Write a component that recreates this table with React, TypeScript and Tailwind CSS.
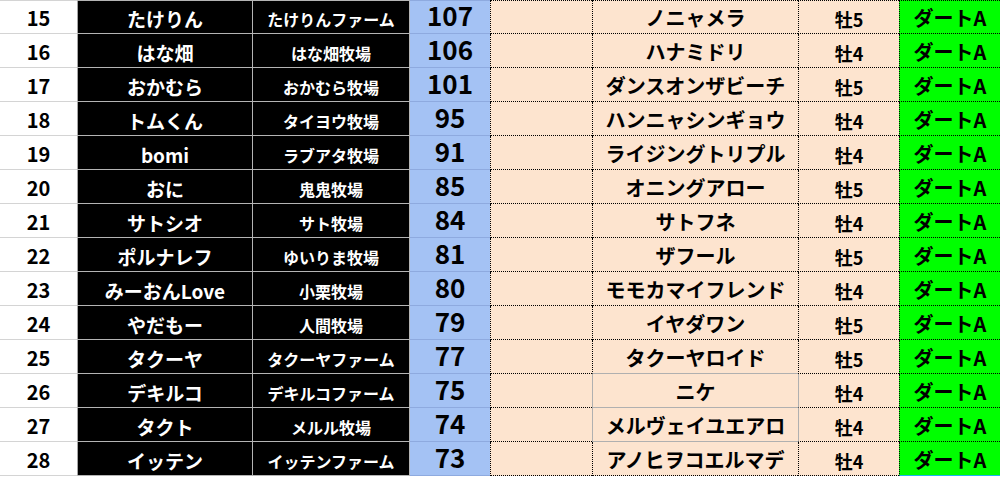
import clsx from "clsx";

const rows = [
    [15, "たけりん", "たけりんファーム", 107, "ノニャメラ", "牡5"],
    [16, "はな畑", "はな畑牧場", 106, "ハナミドリ", "牡4"],
    [17, "おかむら", "おかむら牧場", 101, "ダンスオンザビーチ", "牡5"],
    [18, "トムくん", "タイヨウ牧場", 95, "ハンニャシンギョウ", "牡4"],
    [19, "bomi", "ラブアタ牧場", 91, "ライジングトリプル", "牡4"],
    [20, "おに", "鬼鬼牧場", 85, "オニングアロー", "牡5"],
    [21, "サトシオ", "サト牧場", 84, "サトフネ", "牡4"],
    [22, "ポルナレフ", "ゆいりま牧場", 81, "ザフール", "牡5"],
    [23, "みーおんLove", "小栗牧場", 80, "モモカマイフレンド", "牡4"],
    [24, "やだもー", "人間牧場", 79, "イヤダワン", "牡5"],
    [25, "タクーヤ", "タクーヤファーム", 77, "タクーヤロイド", "牡5"],
    [26, "デキルコ", "デキルコファーム", 75, "ニケ", "牡4"],
    [27, "タクト", "メルル牧場", 74, "メルヴェイユエアロ", "牡4"],
    [28, "イッテン", "イッテンファーム", 73, "アノヒヲコエルマデ", "牡4"],
] as const;

const cell = "flex items-end justify-center pb-[5px] leading-none whitespace-nowrap";

export default function App() {
    return (
        <div className="w-[1000px] h-[477px] overflow-hidden bg-white font-['Noto_Sans_CJK_JP',sans-serif] font-bold">
            <div className="grid grid-cols-[78px_175px_157px_80px_102px_206px_101px_101px] auto-rows-[34px]">
                {rows.map(([no, owner, farm, pts, horse, sex], i) => {
                    const first = i === 0;
                    const last = i === rows.length - 1;
                    // rows 26 and 27 have plain grey borders round the horse cell
                    const boxed = no === 26 || no === 27;
                    const above = no === 25;
                    return (
                        <div key={no} className="contents">
                            {/* rank */}
                            <div className={clsx(cell, "text-[20px] text-black border-b border-r border-r-[#a6a6a6] border-b-[#d4d4d4]", first && "border-t border-t-[#d4d4d4]")}>
                                {no}
                            </div>

                            {/* owner */}
                            <div className={clsx(cell, "bg-black text-white text-[19px] border-b border-r border-[#b4b4b4]", first && "border-t")}>
                                {owner}
                            </div>

                            {/* farm */}
                            <div className={clsx(cell, "bg-black text-white text-[16px] pb-[6px] border-b border-r border-[#b4b4b4]", first && "border-t")}>
                                {farm}
                            </div>

                            {/* points */}
                            <div className={clsx(cell, "bg-[#a4c2f4] text-black text-[26px] pb-[3px] border-b border-[#8eaadf]", first && "border-t")}>
                                {pts}
                            </div>

                            {/* blank */}
                            <div className={clsx("bg-[#fde4cf] border-l border-b border-dotted border-black", first && "border-t")} />

                            {/* horse */}
                            <div
                                className={clsx(
                                    cell,
                                    "bg-[#fde4cf] text-black text-[20px] border-l border-b",
                                    boxed ? "border-solid border-[#b0b0b0]" : "border-dotted border-black",
                                    above && "border-b-[#b0b0b0]",
                                    first && "border-t"
                                )}
                                style={above ? { borderBottomStyle: "solid" } : undefined}
                            >
                                {horse}
                            </div>

                            {/* sex / age */}
                            <div
                                className={clsx(cell, "bg-[#fde4cf] text-black text-[18px] border-l border-b border-dotted border-black", first && "border-t")}
                                style={boxed ? { borderLeftStyle: "solid", borderLeftColor: "#b0b0b0" } : undefined}
                            >
                                {sex}
                            </div>

                            {/* class */}
                            <div
                                className={clsx(cell, "bg-[#00ff00] text-black text-[20px] border-l border-b border-dotted border-black", first && "border-t", last && "border-b-[#1eb4f0]")}
                                style={last ? { borderBottomStyle: "solid" } : undefined}
                            >
                                ダートA
                            </div>
                        </div>
                    );
                })}
            </div>
        </div>
    );
}
